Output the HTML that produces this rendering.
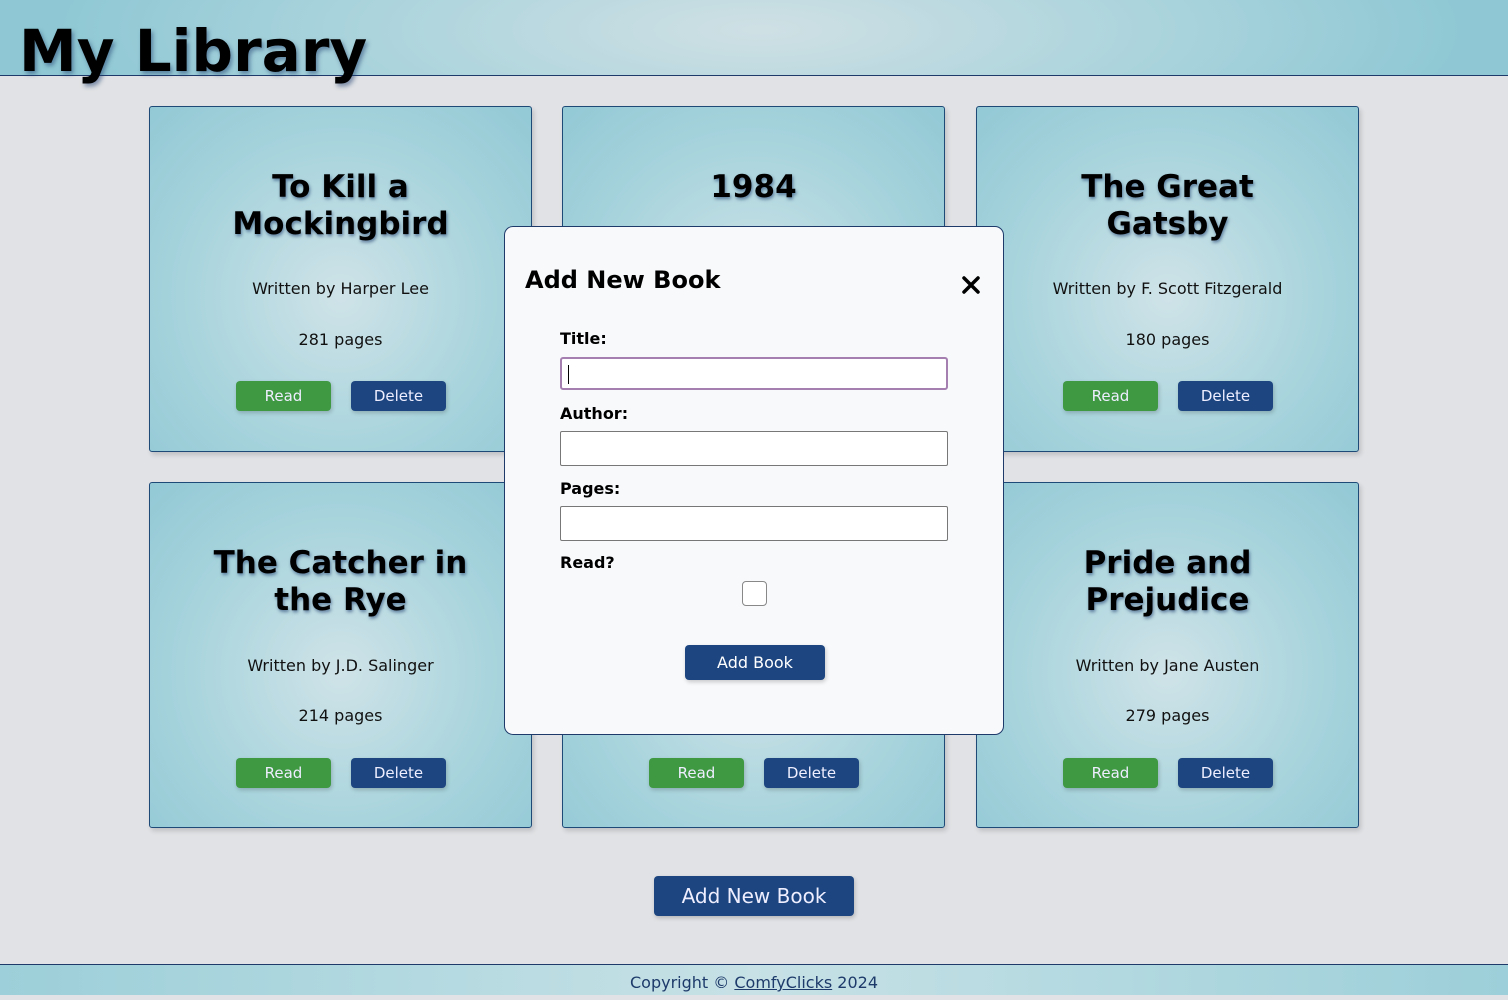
<!DOCTYPE html>
<html><head><meta charset="utf-8"><style>
*{box-sizing:border-box;margin:0;padding:0}
body{width:1508px;height:995px;background:#e0e2e5;font-family:"DejaVu Sans",Verdana,sans-serif;position:relative;overflow:hidden}
.hdr{position:absolute;left:0;top:0;width:1508px;height:76px;border-bottom:1px solid #1e3a6a;background:radial-gradient(ellipse 700px 180px at 760px 30px,#cfe0e4,#a9d3dc 60%,#8fc8d4)}
.hdr h1{position:absolute;left:19px;top:17px;font-size:58px;font-weight:bold;color:#000;text-shadow:2px 3px 4px rgba(30,60,110,.5);white-space:nowrap}
.card{position:absolute;width:383px;height:346px;border:1px solid #1e4a78;border-radius:3px;background:radial-gradient(ellipse at 50% 55%,#cfe3e8,#a6d3dc 60%,#92c9d5);box-shadow:2px 3px 5px rgba(0,0,0,.15);text-align:center}
.card h2{position:absolute;left:0;right:0;font-size:31px;line-height:37px;font-weight:bold;text-shadow:1px 2px 3px rgba(30,60,110,.6);color:#000}
.card .a,.card .p{position:absolute;left:0;right:0;font-size:16px;color:#111}
.b{position:absolute;top:274px;width:95px;height:30px;border-radius:4px;color:#eef;font-size:15px;line-height:30px;text-align:center;box-shadow:1px 2px 4px rgba(0,0,0,.2)}
.g{background:#3f9842;left:86px}.d{background:#1d4681;left:201px}
.modal{position:absolute;left:504px;top:226px;width:500px;height:509px;background:#f7f9fb;border:1px solid #1e3a6a;border-radius:9px}
.lab{position:absolute;left:55px;font-size:16px;font-weight:bold}
.inp{position:absolute;left:55px;width:388px;height:35px;background:#fff;border:1px solid #777;border-radius:2px}
.ftr{position:absolute;left:0;top:964px;width:1508px;height:31px;border-top:1px solid #1e3a6a;background:linear-gradient(90deg,#9ccfd9,#c7e1e6 50%,#9ccfd9);text-align:center;font-size:16px;line-height:35px;color:#1d3a6a}
.ftr a{color:#1d3a6a;text-decoration:underline}
</style></head><body>
<div class="hdr"><h1>My Library</h1></div>

<div class="card" style="left:149px;top:106px"><h2 style="top:62px">To Kill a<br>Mockingbird</h2><div class="a" style="top:172px">Written by Harper Lee</div><div class="p" style="top:223px">281 pages</div><div class="b g">Read</div><div class="b d">Delete</div></div>
<div class="card" style="left:562px;top:106px"><h2 style="top:62px">1984</h2></div>
<div class="card" style="left:976px;top:106px"><h2 style="top:62px">The Great<br>Gatsby</h2><div class="a" style="top:172px">Written by F. Scott Fitzgerald</div><div class="p" style="top:223px">180 pages</div><div class="b g">Read</div><div class="b d">Delete</div></div>
<div class="card" style="left:149px;top:482px"><h2 style="top:62px">The Catcher in<br>the Rye</h2><div class="a" style="top:173px">Written by J.D. Salinger</div><div class="p" style="top:223px">214 pages</div><div class="b g" style="top:275px">Read</div><div class="b d" style="top:275px">Delete</div></div>
<div class="card" style="left:562px;top:482px"><div class="b g" style="top:275px">Read</div><div class="b d" style="top:275px">Delete</div></div>
<div class="card" style="left:976px;top:482px"><h2 style="top:62px">Pride and<br>Prejudice</h2><div class="a" style="top:173px">Written by Jane Austen</div><div class="p" style="top:223px">279 pages</div><div class="b g" style="top:275px">Read</div><div class="b d" style="top:275px">Delete</div></div>

<div class="modal">
<div style="position:absolute;left:20px;top:39px;font-size:24px;font-weight:bold">Add New Book</div>
<svg style="position:absolute;left:457px;top:49px" width="18" height="18" viewBox="0 0 18 18"><path d="M2 2L16 16M16 2L2 16" stroke="#000" stroke-width="3.5" stroke-linecap="round"/></svg>
<div class="lab" style="top:102px">Title:</div>
<div class="inp" style="top:130px;height:33px;border:2px solid #a57fb0;border-radius:3px"><div style="position:absolute;left:6px;top:6px;width:1px;height:19px;background:#000"></div></div>
<div class="lab" style="top:177px">Author:</div>
<div class="inp" style="top:204px"></div>
<div class="lab" style="top:252px">Pages:</div>
<div class="inp" style="top:279px"></div>
<div class="lab" style="top:326px">Read?</div>
<div style="position:absolute;left:237px;top:354px;width:25px;height:25px;border:1px solid #888;border-radius:4px;background:#fff"></div>
<div style="position:absolute;left:180px;top:418px;width:140px;height:35px;border-radius:4px;background:#1d4681;color:#fff;font-size:16px;line-height:35px;text-align:center;box-shadow:1px 2px 4px rgba(0,0,0,.2)">Add Book</div>
</div>

<div style="position:absolute;left:654px;top:876px;width:200px;height:40px;border-radius:4px;background:#1d4681;color:#eef;font-size:20px;line-height:40px;text-align:center;box-shadow:1px 2px 4px rgba(0,0,0,.2)">Add New Book</div>

<div class="ftr">Copyright © <a>ComfyClicks</a> 2024</div>
</body></html>
